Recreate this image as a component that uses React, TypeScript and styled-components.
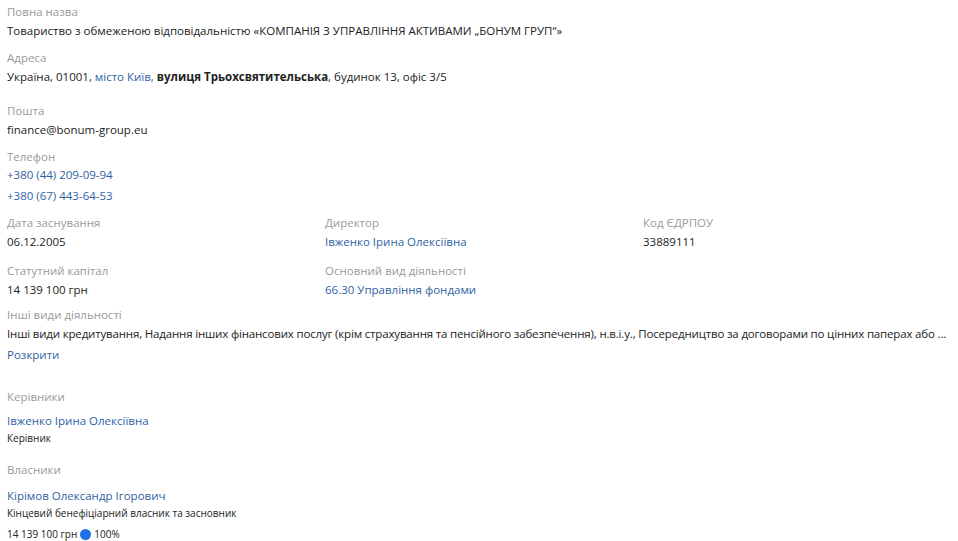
import React, { FC } from 'react'
import styled, { createGlobalStyle } from 'styled-components'

const Global = createGlobalStyle`
  html, body {
    margin: 0;
    padding: 0;
    background: #fff;
  }
  body {
    font-family: 'Open Sans', 'Noto Sans', Arial, sans-serif;
    font-size: 11.5px;
    color: #222;
  }
`

const Page = styled.div`
  padding: 4px 7px 0 7px;
  width: 944px;
  box-sizing: content-box;
`

const Field = styled.div<{ $gap?: number }>`
  display: flex;
  flex-direction: column;
  gap: 2px;
  margin-bottom: ${(p) => p.$gap ?? 10}px;
  min-width: 0;
`

const Label = styled.div`
  font-size: 11.5px;
  line-height: 16px;
  color: #9a9a9a;
`

const Value = styled.div`
  font-size: 11.5px;
  line-height: 18px;
  color: #222;
`

const Link = styled.a`
  font-size: 11.5px;
  line-height: 18px;
  color: #2f62a3;
  text-decoration: none;
  display: block;
`

const InlineLink = styled.span`
  color: #2f62a3;
`

const Phones = styled.div`
  display: flex;
  flex-direction: column;
  gap: 3px;
  margin-top: -1px;
`

const Grid = styled.div`
  display: grid;
  grid-template-columns: 318px 318px 1fr;
  row-gap: 12px;
  margin-bottom: 8px;
`

const Truncated = styled(Value)`
  white-space: nowrap;
  overflow: hidden;
  text-overflow: ellipsis;
  letter-spacing: -0.17px;
`

const MoreLink = styled(Link)`
  margin-top: 1px;
`

const Section = styled.div<{ $top: number }>`
  margin-top: ${(p) => p.$top}px;
`

const SectionTitle = styled.div<{ $bottom: number }>`
  font-size: 11.5px;
  line-height: 16px;
  color: #9a9a9a;
  margin-bottom: ${(p) => p.$bottom}px;
`

const Person = styled.div`
  display: flex;
  flex-direction: column;
`

const Role = styled.div`
  font-size: 10px;
  line-height: 16px;
  color: #222;
`

const Share = styled.div`
  display: flex;
  align-items: center;
  gap: 3px;
  margin-top: 5px;
  font-size: 10px;
  line-height: 16px;
  color: #222;
`

const Dot = styled.span`
  width: 11px;
  height: 11px;
  border-radius: 50%;
  background: #1f6fe5;
  display: inline-block;
`

const App: FC = () => (
  <Page>
    <Global />
    <Field>
      <Label>Повна назва</Label>
      <Value>Товариство з обмеженою відповідальністю «КОМПАНІЯ З УПРАВЛІННЯ АКТИВАМИ „БОНУМ ГРУП“»</Value>
    </Field>
    <Field $gap={17}>
      <Label>Адреса</Label>
      <Value>
        Україна, 01001, <InlineLink>місто Київ,</InlineLink> <b>вулиця Трьохсвятительська</b>, будинок 13, офіс 3/5
      </Value>
    </Field>
    <Field>
      <Label>Пошта</Label>
      <Value>finance@bonum-group.eu</Value>
    </Field>
    <Field $gap={10}>
      <Label>Телефон</Label>
      <Phones>
        <Link href="#">+380 (44) 209-09-94</Link>
        <Link href="#">+380 (67) 443-64-53</Link>
      </Phones>
    </Field>
    <Grid>
      <Field $gap={0}>
        <Label>Дата заснування</Label>
        <Value>06.12.2005</Value>
      </Field>
      <Field $gap={0}>
        <Label>Директор</Label>
        <Link href="#">Івженко Ірина Олексіївна</Link>
      </Field>
      <Field $gap={0}>
        <Label>Код ЄДРПОУ</Label>
        <Value>33889111</Value>
      </Field>
      <Field $gap={0}>
        <Label>Статутний капітал</Label>
        <Value>14 139 100 грн</Value>
      </Field>
      <Field $gap={0}>
        <Label>Основний вид діяльності</Label>
        <Link href="#">66.30 Управління фондами</Link>
      </Field>
    </Grid>
    <Field $gap={0}>
      <Label>Інші види діяльності</Label>
      <Truncated>
        Інші види кредитування, Надання інших фінансових послуг (крім страхування та пенсійного забезпечення), н.в.і.у., Посередництво за договорами по цінних паперах або ...
      </Truncated>
      <MoreLink href="#">Розкрити</MoreLink>
    </Field>
    <Section $top={25}>
      <SectionTitle $bottom={7}>Керівники</SectionTitle>
      <Person>
        <Link href="#">Івженко Ірина Олексіївна</Link>
        <Role>Керівник</Role>
      </Person>
    </Section>
    <Section $top={16}>
      <SectionTitle $bottom={9}>Власники</SectionTitle>
      <Person>
        <Link href="#">Кірімов Олександр Ігорович</Link>
        <Role>Кінцевий бенефіціарний власник та засновник</Role>
        <Share>
          14 139 100 грн <Dot /> 100%
        </Share>
      </Person>
    </Section>
  </Page>
)

export default App
